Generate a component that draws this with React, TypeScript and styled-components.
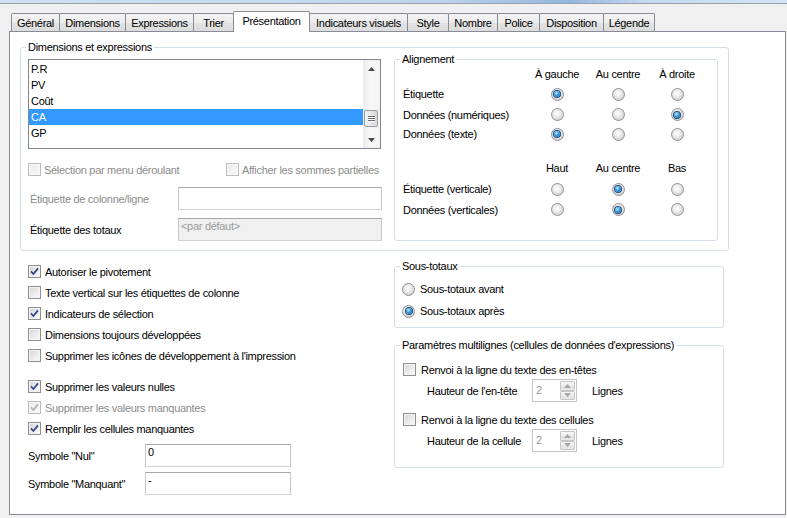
import React from "react";
import styled, { createGlobalStyle } from "styled-components";

const GlobalStyle = createGlobalStyle`
  * { box-sizing: border-box; }
  html, body { margin: 0; padding: 0; }
  body {
    background: #f0f0f0;
    font-family: "Liberation Sans", Arial, sans-serif;
    font-size: 11px;
    letter-spacing: -0.3px;
    color: #000;
  }
`;

const Dialog = styled.div`
  width: 787px;
  height: 518px;
  overflow: hidden;
  background: #f0f0f0;
`;

const Chrome = styled.div`
  height: 4px;
  background: linear-gradient(90deg, #cfe0f3 0%, #bfd5ed 55%, #94b6de 72%, #c3d9f0 82%, #d4e4f5 100%);
  border-bottom: 1px solid #97a2ad;
`;

const TabStrip = styled.div`
  display: flex;
  align-items: flex-end;
  height: 20px;
  margin: 7px 0 0 11px;
`;

const Tab = styled.div<{ $w: number; $active?: boolean }>`
  position: relative;
  z-index: ${(p) => (p.$active ? 2 : 1)};
  flex: none;
  width: ${(p) => p.$w}px;
  height: ${(p) => (p.$active ? 21 : 18)}px;
  margin-right: -1px;
  margin-bottom: ${(p) => (p.$active ? -1 : 0)}px;
  padding-bottom: ${(p) => (p.$active ? 2 : 0)}px;
  border: 1px solid #898c95;
  border-bottom: none;
  border-radius: 2px 2px 0 0;
  background: ${(p) =>
    p.$active ? "#fff" : "linear-gradient(#f4f4f4, #ebebeb 50%, #e3e3e3 51%, #dcdcdc)"};
  display: flex;
  align-items: center;
  justify-content: center;
  white-space: nowrap;
`;

const Panel = styled.div`
  width: 777px;
  height: 484px;
  margin-left: 9px;
  border: 1px solid #898c95;
  background: #fff;
  padding: 15px 0 0 10px;
`;

const Group = styled.div<{ $w: number; $h: number }>`
  position: relative;
  flex: none;
  width: ${(p) => p.$w}px;
  height: ${(p) => p.$h}px;
  border: 1px solid #d5dfe5;
  border-radius: 3px;
`;

const Caption = styled.span`
  position: absolute;
  top: -7px;
  left: 5px;
  padding: 0 2px;
  background: #fff;
  line-height: 13px;
  white-space: nowrap;
`;

const DimGroup = styled(Group)`
  display: flex;
  gap: 12px;
  padding: 11px 0 0 7px;
`;

const LeftCol = styled.div`
  width: 354px;
  display: flex;
  flex-direction: column;
`;

const ListBox = styled.div`
  width: 353px;
  height: 90px;
  border: 1px solid #828790;
  display: flex;
  background: #fff;
`;

const ListItems = styled.div`
  flex: 1;
  padding-top: 1px;
`;

const ListItem = styled.div<{ $selected?: boolean }>`
  height: 16px;
  line-height: 16px;
  padding-left: 2px;
  background: ${(p) => (p.$selected ? "#3399ff" : "transparent")};
  color: ${(p) => (p.$selected ? "#fff" : "#000")};
`;

const ScrollBar = styled.div`
  width: 17px;
  display: flex;
  flex-direction: column;
  background: linear-gradient(90deg, #ececec, #f7f7f7 40%, #f3f3f3);
`;

const ScrollArrow = styled.div`
  height: 17px;
  display: flex;
  align-items: center;
  justify-content: center;
`;

const ScrollTrack = styled.div`
  flex: 1;
`;

const ScrollThumb = styled.div<{ $top: number }>`
  margin: ${(p) => p.$top}px 2px 0 1px;
  height: 17px;
  border: 1px solid #9a9da2;
  border-radius: 2px;
  background: linear-gradient(90deg, #f3f3f3, #e6e6e6 50%, #d9d9d9);
  display: flex;
  flex-direction: column;
  align-items: center;
  justify-content: center;
  gap: 1px;
`;

const Grip = styled.span`
  width: 7px;
  height: 1px;
  background: #6c6c6c;
  box-shadow: 0 1px 0 #fff;
`;

const OptionPair = styled.div`
  display: grid;
  grid-template-columns: 198px auto;
  margin-top: 14px;
  height: 13px;
`;

const CheckItem = styled.label<{ $disabled?: boolean; $gap?: number }>`
  display: flex;
  align-items: center;
  gap: ${(p) => p.$gap ?? 4}px;
  color: ${(p) => (p.$disabled ? "#8d8d8d" : "#000")};
  white-space: nowrap;
`;

const BoxMark = styled.span<{ $disabled?: boolean }>`
  flex: none;
  width: 13px;
  height: 13px;
  border: 1px solid ${(p) => (p.$disabled ? "#bcbcbc" : "#8e8f8f")};
  background: ${(p) =>
    p.$disabled
      ? "linear-gradient(135deg, #ececec, #f8f8f8)"
      : "linear-gradient(135deg, #d3d3d3 0%, #ececec 55%, #fbfbfb 100%)"};
  box-shadow: inset 0 0 0 1px ${(p) => (p.$disabled ? "#f9f9f9" : "#f4f4f4")};
  display: flex;
  align-items: center;
  justify-content: center;
`;

const FieldRow = styled.div<{ $mt: number }>`
  display: flex;
  align-items: center;
  height: 23px;
  margin-top: ${(p) => p.$mt}px;
`;

const FieldLabel = styled.span<{ $w: number; $disabled?: boolean; $pl?: number }>`
  flex: none;
  width: ${(p) => p.$w}px;
  padding-left: ${(p) => p.$pl ?? 0}px;
  color: ${(p) => (p.$disabled ? "#8d8d8d" : "#000")};
  white-space: nowrap;
`;

const TextBox = styled.div<{ $w: number; $disabled?: boolean }>`
  flex: none;
  width: ${(p) => p.$w}px;
  height: 23px;
  border: 1px solid #abadb3;
  border-color: #a5a7ad #c5c8ce #cfd2d7 #c5c8ce;
  background: ${(p) => (p.$disabled ? "#f0f0f0" : "#fff")};
  color: ${(p) => (p.$disabled ? "#9a9a9a" : "#000")};
  padding: 1px 2px;
  line-height: 13px;
`;

const AlignGroup = styled(Group)`
  padding: 4px 0 0 8px;
`;

const AlignGrid = styled.div<{ $rows: string; $mt?: number }>`
  display: grid;
  grid-template-columns: 124px 60px 62px 56px;
  grid-template-rows: ${(p) => p.$rows};
  align-items: center;
  margin-top: ${(p) => p.$mt ?? 0}px;
`;

const ColHead = styled.span`
  justify-self: center;
  white-space: nowrap;
`;

const Cell = styled.span`
  justify-self: center;
  display: flex;
`;

const RowLabel = styled.span`
  white-space: nowrap;
`;

const RadioMark = styled.span<{ $on?: boolean }>`
  flex: none;
  width: 13px;
  height: 13px;
  border-radius: 50%;
  border: 1px solid #8f9397;
  background: radial-gradient(circle at 45% 40%, #fdfdfd 0%, #eeeeee 35%, #d2d2d2 75%, #c4c4c4 100%);
  display: flex;
  align-items: center;
  justify-content: center;
  &::after {
    content: "";
    display: ${(p) => (p.$on ? "block" : "none")};
    width: 6px;
    height: 6px;
    border-radius: 50%;
    background: radial-gradient(circle at 40% 35%, #bfe8ff 0%, #3a9be0 45%, #0f5a98 100%);
    box-shadow: 0 0 0 1px #1f4a78;
  }
`;

const BottomRow = styled.div`
  display: flex;
`;

const BottomLeft = styled.div`
  width: 366px;
  margin-left: 8px;
  padding-top: 10px;
  display: flex;
  flex-direction: column;
`;

const CheckRow = styled(CheckItem)<{ $mt?: number }>`
  height: 21px;
  margin-top: ${(p) => p.$mt ?? 0}px;
`;

const BottomRight = styled.div`
  padding-top: 15px;
  display: flex;
  flex-direction: column;
`;

const SubTotGroup = styled(Group)`
  padding: 11px 0 0 7px;
`;

const RadioRow = styled.label`
  display: flex;
  align-items: center;
  gap: 5px;
  height: 22px;
`;

const MultiGroup = styled(Group)`
  margin-top: 17px;
  padding: 14px 0 0 8px;
`;

const MultiCheck = styled(CheckItem)<{ $mt?: number }>`
  height: 19px;
  margin-top: ${(p) => p.$mt ?? 0}px;
`;

const SpinRow = styled.div`
  display: flex;
  align-items: center;
  height: 23px;
  padding-left: 24px;
`;

const Spinner = styled.div`
  flex: none;
  width: 45px;
  height: 23px;
  border: 1px solid #c2c4c9;
  display: flex;
  background: #fff;
`;

const SpinValue = styled.span`
  flex: 1;
  color: #9a9a9a;
  padding: 3px 3px;
  line-height: 15px;
`;

const SpinButtons = styled.div`
  width: 16px;
  display: flex;
  flex-direction: column;
  padding: 1px 1px 1px 0;
`;

const SpinButton = styled.span`
  flex: 1;
  border: 1px solid #c6c6c6;
  border-radius: 1px;
  background: linear-gradient(#f8f8f8, #ececec 50%, #e1e1e1 51%, #e9e9e9);
  display: flex;
  align-items: center;
  justify-content: center;
`;

const Unit = styled.span`
  margin-left: 15px;
`;

const CheckIcon = ({ disabled }: { disabled?: boolean }) => (
  <svg width="9" height="9" viewBox="0 0 9 9">
    <path
      d="M1 4.4 L3.4 7 L8 1.4"
      fill="none"
      stroke={disabled ? "#b4b4b4" : "#34488a"}
      strokeWidth="1.8"
    />
  </svg>
);

const Check = ({ checked, disabled }: { checked?: boolean; disabled?: boolean }) => (
  <BoxMark $disabled={disabled}>{checked && <CheckIcon disabled={disabled} />}</BoxMark>
);

const Triangle = ({ up, color = "#4a4a4a" }: { up?: boolean; color?: string }) => (
  <svg width="7" height="4" viewBox="0 0 7 4">
    <path d={up ? "M0 4 L3.5 0 L7 4 Z" : "M0 0 L3.5 4 L7 0 Z"} fill={color} />
  </svg>
);

const tabs = [
  { label: "Général", w: 49 },
  { label: "Dimensions", w: 67 },
  { label: "Expressions", w: 69 },
  { label: "Trier", w: 41 },
  { label: "Présentation", w: 77, active: true },
  { label: "Indicateurs visuels", w: 99 },
  { label: "Style", w: 42 },
  { label: "Nombre", w: 50 },
  { label: "Police", w: 43 },
  { label: "Disposition", w: 65 },
  { label: "Légende", w: 52 },
];

const listItems = ["P.R", "PV", "Coût", "CA", "GP"];

const horiz = [
  { label: "Étiquette", sel: 0 },
  { label: "Données (numériques)", sel: 2 },
  { label: "Données (texte)", sel: 0 },
];

const vert = [
  { label: "Étiquette (verticale)", sel: 1 },
  { label: "Données (verticales)", sel: 1 },
];

const leftChecks1 = [
  { label: "Autoriser le pivotement", checked: true },
  { label: "Texte vertical sur les étiquettes de colonne" },
  { label: "Indicateurs de sélection", checked: true },
  { label: "Dimensions toujours développées" },
  { label: "Supprimer les icônes de développement à l'impression" },
];

const leftChecks2 = [
  { label: "Supprimer les valeurs nulles", checked: true },
  { label: "Supprimer les valeurs manquantes", checked: true, disabled: true },
  { label: "Remplir les cellules manquantes", checked: true },
];

const SpinBox = ({ value }: { value: string }) => (
  <Spinner>
    <SpinValue>{value}</SpinValue>
    <SpinButtons>
      <SpinButton>
        <Triangle up color="#a8a8a8" />
      </SpinButton>
      <SpinButton>
        <Triangle color="#a8a8a8" />
      </SpinButton>
    </SpinButtons>
  </Spinner>
);

const RadioGrid = ({
  heads,
  rows,
  template,
  mt,
}: {
  heads: string[];
  rows: { label: string; sel: number }[];
  template: string;
  mt?: number;
}) => (
  <AlignGrid $rows={template} $mt={mt}>
    <span />
    {heads.map((h) => (
      <ColHead key={h}>{h}</ColHead>
    ))}
    {rows.map((r) => (
      <React.Fragment key={r.label}>
        <RowLabel>{r.label}</RowLabel>
        {[0, 1, 2].map((i) => (
          <Cell key={i}>
            <RadioMark $on={r.sel === i} />
          </Cell>
        ))}
      </React.Fragment>
    ))}
  </AlignGrid>
);

export default function App() {
  return (
    <Dialog>
      <GlobalStyle />
      <Chrome />
      <TabStrip>
        {tabs.map((t) => (
          <Tab key={t.label} $w={t.w} $active={t.active}>
            {t.label}
          </Tab>
        ))}
      </TabStrip>
      <Panel>
        <DimGroup $w={709} $h={204}>
          <Caption>Dimensions et expressions</Caption>
          <LeftCol>
            <ListBox>
              <ListItems>
                {listItems.map((it) => (
                  <ListItem key={it} $selected={it === "CA"}>
                    {it}
                  </ListItem>
                ))}
              </ListItems>
              <ScrollBar>
                <ScrollArrow>
                  <Triangle up />
                </ScrollArrow>
                <ScrollTrack>
                  <ScrollThumb $top={33}>
                    <Grip />
                    <Grip />
                    <Grip />
                  </ScrollThumb>
                </ScrollTrack>
                <ScrollArrow>
                  <Triangle />
                </ScrollArrow>
              </ScrollBar>
            </ListBox>
            <OptionPair>
              <CheckItem $disabled $gap={3}>
                <Check disabled />
                Sélection par menu déroulant
              </CheckItem>
              <CheckItem $disabled $gap={3}>
                <Check disabled />
                Afficher les sommes partielles
              </CheckItem>
            </OptionPair>
            <FieldRow $mt={11}>
              <FieldLabel $w={150} $pl={2} $disabled>
                Étiquette de colonne/ligne
              </FieldLabel>
              <TextBox $w={204} />
            </FieldRow>
            <FieldRow $mt={8}>
              <FieldLabel $w={150} $pl={2}>
                Étiquette des totaux
              </FieldLabel>
              <TextBox $w={204} $disabled>
                &lt;par défaut&gt;
              </TextBox>
            </FieldRow>
          </LeftCol>
          <AlignGroup $w={324} $h={182}>
            <Caption>Alignement</Caption>
            <RadioGrid
              heads={["À gauche", "Au centre", "À droite"]}
              rows={horiz}
              template="20px 20px 21px 18px"
            />
            <RadioGrid
              heads={["Haut", "Au centre", "Bas"]}
              rows={vert}
              template="20px 22px 19px"
              mt={15}
            />
          </AlignGroup>
        </DimGroup>

        <BottomRow>
          <BottomLeft>
            {leftChecks1.map((c) => (
              <CheckRow key={c.label}>
                <Check checked={c.checked} />
                {c.label}
              </CheckRow>
            ))}
            {leftChecks2.map((c, i) => (
              <CheckRow key={c.label} $mt={i === 0 ? 10 : 0} $disabled={c.disabled}>
                <Check checked={c.checked} disabled={c.disabled} />
                {c.label}
              </CheckRow>
            ))}
            <FieldRow $mt={5}>
              <FieldLabel $w={117}>Symbole "Nul"</FieldLabel>
              <TextBox $w={146}>0</TextBox>
            </FieldRow>
            <FieldRow $mt={5}>
              <FieldLabel $w={117}>Symbole "Manquant"</FieldLabel>
              <TextBox $w={146}>-</TextBox>
            </FieldRow>
          </BottomLeft>

          <BottomRight>
            <SubTotGroup $w={330} $h={62}>
              <Caption>Sous-totaux</Caption>
              <RadioRow>
                <RadioMark />
                Sous-totaux avant
              </RadioRow>
              <RadioRow>
                <RadioMark $on />
                Sous-totaux après
              </RadioRow>
            </SubTotGroup>
            <MultiGroup $w={330} $h={123}>
              <Caption>Paramètres multilignes (cellules de données d'expressions)</Caption>
              <MultiCheck $gap={5}>
                <Check />
                Renvoi à la ligne du texte des en-têtes
              </MultiCheck>
              <SpinRow>
                <FieldLabel $w={105}>Hauteur de l'en-tête</FieldLabel>
                <SpinBox value="2" />
                <Unit>Lignes</Unit>
              </SpinRow>
              <MultiCheck $gap={5} $mt={8}>
                <Check />
                Renvoi à la ligne du texte des cellules
              </MultiCheck>
              <SpinRow>
                <FieldLabel $w={105}>Hauteur de la cellule</FieldLabel>
                <SpinBox value="2" />
                <Unit>Lignes</Unit>
              </SpinRow>
            </MultiGroup>
          </BottomRight>
        </BottomRow>
      </Panel>
    </Dialog>
  );
}
